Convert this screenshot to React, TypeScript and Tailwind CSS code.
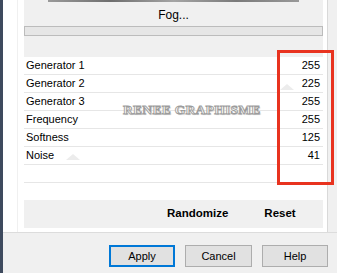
import React from 'react';

const rows = [
  { label: 'Generator 1', value: '255' },
  { label: 'Generator 2', value: '225' },
  { label: 'Generator 3', value: '255' },
  { label: 'Frequency', value: '255' },
  { label: 'Softness', value: '125' },
  { label: 'Noise', value: '41' },
  { label: '', value: '' },
];

const font = { fontFamily: '"Liberation Sans", Arial, sans-serif' };

const App = () => {
  return (
    <div className="relative w-[337px] h-[273px] bg-[#f0f0f0] flex overflow-hidden text-black" style={font}>
      {/* left window edge */}
      <div className="w-[3px] h-full bg-[#3e4a5e]" />

      <div className="flex-1 flex flex-col">
        {/* dialog body */}
        <div className="flex h-[233px] border-b border-[#dcdcdc]">
          <div className="w-[15px] bg-white border-r border-[#f0f0f0]" />
          <div className="w-[310px] bg-white border-r border-[#d9d9d9] pl-[6px] pr-[4px]">
            {/* preview + title */}
            <div className="h-[57px] bg-[#f0f0f0] flex flex-col">
              <div className="mx-[24px] h-[2px] bg-[linear-gradient(90deg,#9a9a9a,#6e6e6e,#a5a5a5,#7a7a7a,#999)]" />
              <div className="h-[24px] flex items-center justify-center text-[12px] pt-[1px]">Fog...</div>
              <div className="h-[10px] bg-[#e6e6e6] border border-[#bcbcbc]" />
            </div>

            {/* parameter list */}
            <div className="flex flex-col">
              {rows.map((r, i) => (
                <div
                  key={i}
                  className="h-[18px] flex items-center justify-between pl-[2px] pr-[3px] border-b border-[#e6e6e6] text-[11px]"
                >
                  <span>{r.label}</span>
                  <span>{r.value}</span>
                </div>
              ))}
            </div>

            <div className="h-[17px]" />

            {/* randomize / reset bar */}
            <div className="h-[28px] bg-[#f0f0f0] flex items-center text-[11.5px] font-bold">
              <span className="ml-[143px]">Randomize</span>
              <span className="ml-[36px]">Reset</span>
            </div>
          </div>
          <div className="flex-1" />
        </div>

        {/* dialog buttons */}
        <div className="flex-1 flex items-start pt-[12px] pl-[106px] gap-[10px] text-[11px]">
          <button className="w-[66px] h-[22px] bg-[#e1e1e1] border-2 border-[#0078d7] flex items-center justify-center">
            Apply
          </button>
          <button className="w-[67px] h-[22px] bg-[#e1e1e1] border border-[#adadad] flex items-center justify-center">
            Cancel
          </button>
          <button className="w-[66px] h-[22px] bg-[#e1e1e1] border border-[#adadad] flex items-center justify-center">
            Help
          </button>
        </div>
      </div>

      {/* watermark */}
      <div
        className="absolute left-[123px] top-[100px] text-[13.5px] font-bold text-white tracking-[0.3px] [-webkit-text-stroke:0.9px_#9c9c9c] [text-shadow:1px_1px_1px_#c8c8c8]"
        style={{ fontFamily: '"Liberation Serif", "Times New Roman", serif' }}
      >
        RENEE GRAPHISME
      </div>
      <div className="absolute left-[280px] top-[84px] w-0 h-0 border-l-[7px] border-r-[7px] border-b-[6px] border-l-transparent border-r-transparent border-b-[#ececec]" />
      <div className="absolute left-[66px] top-[154px] w-0 h-0 border-l-[7px] border-r-[7px] border-b-[6px] border-l-transparent border-r-transparent border-b-[#ececec]" />

      {/* red highlight */}
      <div className="absolute left-[277px] top-[50px] w-[57px] h-[135px] border-[3px] border-[#e8331f]" />
    </div>
  );
};

export default App;
